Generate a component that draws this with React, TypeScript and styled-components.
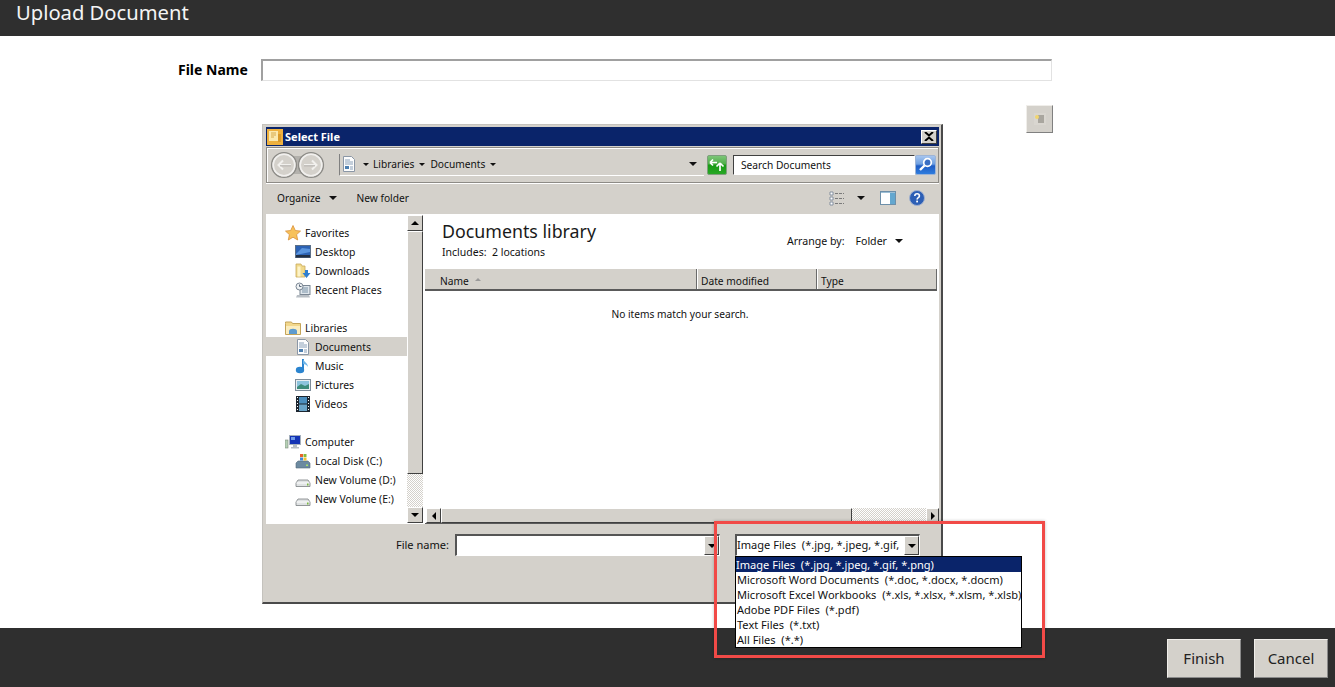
import React from "react";
import styled, { createGlobalStyle } from "styled-components";

const Global = createGlobalStyle`
  html, body { margin: 0; padding: 0; height: 100%; background: #fff; overflow: hidden; }
  #root { height: 100%; }
  * { box-sizing: border-box; }
`;

const FACE = "#d4d1cb";
const UI = `"Noto Sans", "DejaVu Sans", sans-serif`;

const Page = styled.div`
  position: relative;
  height: 100vh;
  min-height: 687px;
  display: flex;
  flex-direction: column;
  font-family: "Noto Sans", sans-serif;
  color: #000;
`;
const Header = styled.header`
  height: 36px;
  flex: none;
  background: #2f2f2f;
  color: #f4f4f4;
  padding: 1px 0 0 16px;
  font-size: 20.2px;
  line-height: 22px;
`;
const Main = styled.main`
  flex: 1;
  min-height: 0;
`;
const FileRow = styled.div`
  display: flex;
  align-items: center;
  margin-top: 23px;
  padding-left: 178px;
  height: 22px;
`;
const FileLabel = styled.label`
  width: 83px;
  flex: none;
  font-weight: 700;
  font-size: 14px;
  line-height: 18px;
  padding-bottom: 1px;
`;
const FileInput = styled.div`
  width: 791px;
  height: 22px;
  border: 1px solid #e2e2e2;
  border-top: 2px solid #a0a0a0;
  border-left: 2px solid #a0a0a0;
`;
const Workspace = styled.div`
  display: flex;
  align-items: flex-start;
  margin-top: 24px;
  padding-left: 262px;
`;
const AttachButton = styled.button`
  width: 27px;
  height: 28px;
  margin-left: 83px;
  padding: 0;
  display: flex;
  align-items: center;
  justify-content: center;
  background: ${FACE};
  border: 1px solid;
  border-color: #f0eeea #808080 #808080 #f0eeea;
`;
const Dialog = styled.section`
  position: relative;
  width: 681px;
  height: 480px;
  margin-top: 19px;
  flex: none;
  display: flex;
  flex-direction: column;
  background: ${FACE};
  border: 1px solid #c4c2bd;
  border-right: 2px solid #4a4a4a;
  border-bottom: 2px solid #4a4a4a;
  padding: 2px 2px 1px 3px;
  font-family: ${UI};
  font-size: 10.2px;
  color: #111;
`;
const TitleBar = styled.div`
  height: 19px;
  flex: none;
  display: flex;
  align-items: center;
  background: #0a246a;
  color: #fff;
  font-weight: 700;
  font-size: 11px;
  padding: 0 2px 0 1px;
`;
const TitleText = styled.span`
  margin-left: 2px;
  flex: 1;
`;
const CloseButton = styled.div`
  width: 16px;
  height: 14px;
  display: flex;
  align-items: center;
  justify-content: center;
  background: ${FACE};
  border: 1px solid;
  border-color: #fff #404040 #404040 #fff;
`;
const AddressBar = styled.div`
  height: 36px;
  flex: none;
  margin-top: 1px;
  display: flex;
  align-items: center;
  padding: 0 2px 1px 3px;
  border: 1px solid #8d8b86;
  box-shadow: inset 1px 1px #fff, 0 1px #fff;
`;
const NavCircles = styled.div`
  display: flex;
  width: 69px;
  flex: none;
`;
const PathBox = styled.div`
  width: 365px;
  height: 22px;
  flex: none;
  display: flex;
  align-items: center;
  border-left: 1px solid #808080;
  border-bottom: 1px solid #fff;
  padding-left: 1px;
  white-space: nowrap;
`;
const Crumb = styled.span<{ $left: number }>`
  margin-left: ${(p) => p.$left}px;
  display: inline-flex;
  align-items: center;
`;
const Caret = styled.span<{ $gap?: number; $size?: number }>`
  display: inline-block;
  flex: none;
  width: 0;
  height: 0;
  margin-left: ${(p) => p.$gap ?? 0}px;
  border-left: ${(p) => p.$size ?? 4}px solid transparent;
  border-right: ${(p) => p.$size ?? 4}px solid transparent;
  border-top: ${(p) => p.$size ?? 4}px solid #111;
`;
const PathEnd = styled.div`
  flex: 1;
  display: flex;
  justify-content: flex-end;
  padding-right: 7px;
`;
const SearchGroup = styled.div`
  display: flex;
  align-items: center;
  margin-left: 6px;
`;
const SearchField = styled.div`
  width: 182px;
  height: 20px;
  display: flex;
  align-items: center;
  padding-left: 7px;
  background: #fff;
  border: 1px solid;
  border-color: #404040 #fff #fff #404040;
`;
const RefreshBox = styled.div`
  width: 20px;
  height: 20px;
  flex: none;
  margin-left: 3px;
`;
const Toolbar = styled.div`
  height: 31px;
  flex: none;
  display: flex;
  align-items: center;
  padding: 0 0 2px 11px;
`;
const ToolText = styled.span<{ $gap?: number }>`
  margin-left: ${(p) => p.$gap ?? 0}px;
`;
const ToolRight = styled.div`
  margin-left: auto;
  display: flex;
  align-items: center;
  padding-right: 14px;
`;
const Gap = styled.span<{ $w: number }>`
  display: inline-block;
  width: ${(p) => p.$w}px;
`;
const Body = styled.div`
  height: 310px;
  flex: none;
  display: flex;
  background: #fff;
`;
const NavPane = styled.nav`
  width: 141px;
  flex: none;
  padding-top: 9px;
  font-size: 10.4px;
`;
const NavRow = styled.div<{ $sub?: boolean; $active?: boolean }>`
  height: 19px;
  display: flex;
  align-items: center;
  gap: 4px;
  padding-left: ${(p) => (p.$sub ? 29 : 19)}px;
  background: ${(p) => (p.$active ? FACE : "transparent")};
  & > svg { flex: none; }
`;
const NavSpacer = styled.div`
  height: 19px;
`;
const VScroll = styled.div`
  width: 16px;
  flex: none;
  display: flex;
  flex-direction: column;
  padding: 1px 0;
`;
const ScrollButton = styled.div<{ $w: number; $h: number }>`
  width: ${(p) => p.$w}px;
  height: ${(p) => p.$h}px;
  flex: none;
  display: flex;
  align-items: center;
  justify-content: center;
  background: ${FACE};
  border: 1px solid;
  border-color: #fff #404040 #404040 #fff;
`;
const Thumb = styled.div<{ $len: number; $horizontal?: boolean }>`
  flex: none;
  ${(p) => (p.$horizontal ? `width: ${p.$len}px; height: 15px;` : `height: ${p.$len}px; width: 16px;`)}
  background: ${FACE};
  border: 1px solid;
  border-color: #fff #404040 #404040 #fff;
`;
const Track = styled.div`
  flex: 1;
  background: repeating-conic-gradient(#d4d1cb 0 25%, #fff 0 50%) 0 0 / 2px 2px;
`;
const ContentPane = styled.div`
  flex: 1;
  min-width: 0;
  margin-left: 2px;
  display: flex;
  flex-direction: column;
`;
const LibraryHead = styled.div`
  height: 55px;
  flex: none;
  display: flex;
  justify-content: space-between;
  padding: 5px 36px 0 17px;
`;
const LibraryTitle = styled.div`
  font-size: 17.8px;
  line-height: 24px;
  color: #1a1a1a;
`;
const LibrarySub = styled.div`
  margin-top: 2px;
  line-height: 14px;
  font-size: 10.5px;
  white-space: pre;
`;
const ArrangeBy = styled.div`
  display: flex;
  align-items: center;
  height: 14px;
  margin-top: 15px;
  font-size: 10.6px;
`;
const Columns = styled.div`
  height: 22px;
  flex: none;
  display: flex;
  margin-right: 2px;
  background: ${FACE};
  border-bottom: 2px solid #5a5a5a;
`;
const Column = styled.div<{ $w: number; $pad: number }>`
  width: ${(p) => p.$w}px;
  flex: none;
  display: flex;
  align-items: center;
  padding-left: ${(p) => p.$pad}px;
  padding-top: 4px;
  border-right: 1px solid #6a6a6a;
  box-shadow: 1px 0 #fff;
`;
const SortMark = styled.span`
  width: 0;
  height: 0;
  margin-left: 6px;
  margin-bottom: 3px;
  border-left: 3px solid transparent;
  border-right: 3px solid transparent;
  border-bottom: 3px solid #9a9a9a;
`;
const Empty = styled.div`
  flex: 1;
  padding: 16px 4px 0 0;
  text-align: center;
  line-height: 14px;
`;
const HScroll = styled.div`
  height: 16px;
  flex: none;
  display: flex;
  padding-left: 1px;
  border-bottom: 1px solid #5a5a5a;
`;
const BottomBar = styled.div`
  flex: 1;
  display: flex;
  align-items: flex-start;
  padding-top: 10px;
  font-size: 11.05px;
`;
const NameLabel = styled.label`
  width: 183px;
  flex: none;
  height: 22px;
  line-height: 21px;
  text-align: right;
  margin-right: 6px;
`;
const Sunken = styled.div<{ $w: number; $gap?: number }>`
  width: ${(p) => p.$w}px;
  height: 22px;
  flex: none;
  margin-left: ${(p) => p.$gap ?? 0}px;
  display: flex;
  align-items: center;
  justify-content: space-between;
  background: #fff;
  border: 1px solid;
  border-width: 2px 1px 1px 2px;
  border-color: #555 #fff #fff #555;
  white-space: pre;
  overflow: hidden;
`;
const SelectText = styled.span`
  margin-top: -2px;
`;
const TypeList = styled.ul`
  position: absolute;
  left: 472px;
  top: 431px;
  width: 287px;
  height: 92px;
  margin: 0;
  padding: 0;
  list-style: none;
  background: #fff;
  border: 1px solid #000;
  font-size: 11.05px;
  z-index: 2;
`;
const TypeItem = styled.li<{ $on?: boolean }>`
  height: 15px;
  line-height: 15px;
  padding-left: ${(p) => (p.$on ? 0 : 1)}px;
  white-space: pre;
  background: ${(p) => (p.$on ? "#0a246a" : "#fff")};
  color: ${(p) => (p.$on ? "#fff" : "#111")};
`;
const Callout = styled.div`
  position: absolute;
  left: 714px;
  top: 521px;
  width: 331px;
  height: 137px;
  border: 3px solid #f14a47;
  box-shadow: 0 0 3px rgba(0, 0, 0, 0.25);
  z-index: 3;
  pointer-events: none;
`;
const Footer = styled.footer`
  height: 59px;
  flex: none;
  display: flex;
  justify-content: flex-end;
  gap: 13px;
  padding: 11px 7px 0 0;
  background: #2f2f2f;
`;
const FooterButton = styled.button`
  width: 74px;
  height: 39px;
  padding: 0 0 2px;
  background: ${FACE};
  border: 1px solid;
  border-color: #f0eeea #8a8a8a #8a8a8a #f0eeea;
  font-family: "Noto Sans", sans-serif;
  font-size: 15px;
  color: #222;
`;

/* ---------- drawings ---------- */
const Svg = ({ s = 16, children }: { s?: number; children: React.ReactNode }) => (
  <svg width={s} height={s} viewBox="0 0 16 16">{children}</svg>
);
const AppIcon = () => (
  <Svg>
    <rect width="16" height="16" fill="#eeb13f" />
    <rect x="2" y="2" width="9" height="10" fill="#fbe9b0" />
    <path d="M4 4h5M4 6h5M4 8h3" stroke="#d6a94a" />
    <rect x="11" y="5" width="3" height="8" fill="#d99a2b" />
  </Svg>
);
const CloseGlyph = () => (
  <svg width="10" height="9" viewBox="0 0 10 9"><path d="M1 0l4 3.5L9 0M1 9l4-3.5L9 9" stroke="#000" strokeWidth="2" fill="none" /></svg>
);
const BackForward = () => (
  <svg width="55" height="28" viewBox="0 0 55 28">
    <rect x="12" y="5" width="30" height="18" fill="#b3b1ac" />
    <circle cx="14" cy="14" r="12.4" fill="#d4d1cb" stroke="#8c8b87" strokeWidth="1.4" />
    <circle cx="14" cy="14" r="10.8" fill="none" stroke="#f1f0ee" strokeWidth="1.6" />
    <circle cx="41" cy="14" r="12.4" fill="#d4d1cb" stroke="#8c8b87" strokeWidth="1.4" />
    <circle cx="41" cy="14" r="10.8" fill="none" stroke="#f1f0ee" strokeWidth="1.6" />
    <path d="M21 14H9M13 9.5L8.5 14l4.5 4.5" stroke="#f2f1ee" strokeWidth="2" fill="none" />
    <path d="M21 14.8H10" stroke="#aeaca7" />
    <path d="M34 14h12M42 9.5l4.5 4.5-4.5 4.5" stroke="#f2f1ee" strokeWidth="2" fill="none" />
    <path d="M34 14.8h11" stroke="#aeaca7" />
  </svg>
);
const DocIcon = () => (
  <Svg>
    <path d="M2.5.5h8l3 3v12h-11z" fill="#fdfdfd" stroke="#8b97a6" />
    <path d="M4 4h5M4 6h8M4 8h8" stroke="#8aa0b8" />
    <rect x="4" y="10" width="4" height="3" fill="#4d7fb0" />
    <path d="M9 11h3M9 13h3" stroke="#8aa0b8" />
  </Svg>
);
const Refresh = () => (
  <svg width="20" height="20" viewBox="0 0 20 20">
    <defs>
      <linearGradient id="refreshFill" x1="0" y1="0" x2="0" y2="1">
        <stop offset="0" stopColor="#7fc77a" />
        <stop offset=".45" stopColor="#4fae49" />
        <stop offset=".5" stopColor="#179a14" />
        <stop offset="1" stopColor="#29a826" />
      </linearGradient>
    </defs>
    <rect x=".5" y=".5" width="19" height="19" rx="1.5" fill="url(#refreshFill)" stroke="#7f9f7d" />
    <path d="M3 7.5h7M3 7.5l3-3M3 7.5l3 3" stroke="#fff" strokeWidth="1.7" fill="none" />
    <path d="M13 16V8M13 8l-3.5 3.5M13 8l3.5 3.5" stroke="#fff" strokeWidth="1.7" fill="none" />
  </svg>
);
const SearchBtn = () => (
  <svg width="21" height="20" viewBox="0 0 21 20">
    <defs>
      <linearGradient id="searchFill" x1="0" y1="0" x2="0" y2="1">
        <stop offset="0" stopColor="#a9c7f0" />
        <stop offset=".45" stopColor="#6e9fe0" />
        <stop offset=".55" stopColor="#1f5cc4" />
        <stop offset="1" stopColor="#2f7fe0" />
      </linearGradient>
    </defs>
    <rect x=".5" y=".5" width="20" height="19" rx="1.5" fill="url(#searchFill)" stroke="#9db4d6" />
    <circle cx="12.5" cy="7.5" r="3.8" fill="#3a6fc4" stroke="#fff" strokeWidth="1.7" />
    <path d="M9.5 10.5L5 15" stroke="#fff" strokeWidth="2.4" />
  </svg>
);
const ViewsIcon = () => (
  <Svg>
    <path d="M1 2h3v3H1zM1 7h3v3H1zM1 12h3v3H1z" fill="#fff" stroke="#6f7d92" strokeWidth=".8" />
    <path d="M6 3.5h9M6 8.5h9M6 13.5h9" stroke="#7a7a7a" strokeDasharray="3 1" />
  </Svg>
);
const PaneIcon = () => (
  <Svg>
    <rect x=".5" y="1.5" width="15" height="13" fill="#fff" stroke="#6d8fa9" />
    <rect x="10" y="2" width="5" height="12" fill="#63a7cf" />
    <path d="M1 2.5h14" stroke="#9dbfd6" />
  </Svg>
);
const HelpIcon = () => (
  <Svg>
    <circle cx="8" cy="8" r="7.5" fill="#2d5fb5" stroke="#9fb0cf" />
    <path d="M5.8 6c0-3 4.6-3 4.6 0 0 1.6-2.3 1.6-2.3 3.4" stroke="#fff" strokeWidth="1.6" fill="none" />
    <rect x="7.2" y="10.6" width="1.8" height="1.8" fill="#fff" />
  </Svg>
);
const Star = () => (
  <Svg><path d="M8 .5l2.3 5 5.2.6-3.9 3.5 1.1 5.4L8 12.2 3.3 15l1.1-5.4L.5 6.1l5.2-.6z" fill="#f7c15a" stroke="#d9903a" strokeWidth=".8" /></Svg>
);
const Desktop = () => (
  <Svg>
    <rect x=".5" y="1.5" width="15" height="12" fill="#2c62b4" stroke="#5b6f88" />
    <path d="M1 10l6-6 8 1v3L1 11z" fill="#5a95df" />
    <rect x="1" y="11" width="14" height="2.5" fill="#222f44" />
  </Svg>
);
const Downloads = () => (
  <Svg>
    <path d="M1 1h5l1 2h3v11H1z" fill="#f1d98b" stroke="#c9a95c" strokeWidth=".8" />
    <rect x="2.5" y="3.5" width="3" height="10" fill="#fdf3c8" />
    <path d="M10 7h3v3h2.5L11.5 15 7.5 10H10z" fill="#2f7ed0" />
  </Svg>
);
const Recent = () => (
  <Svg>
    <rect x="5" y="3.5" width="10" height="9" fill="#dfe6ec" stroke="#7b8794" />
    <path d="M7 6h6M7 8h6M7 10h6" stroke="#7d94a8" />
    <circle cx="4.5" cy="4.5" r="3.5" fill="#eef1f3" stroke="#7b8794" />
    <path d="M4.5 2.5v2h2" stroke="#58677a" fill="none" />
    <path d="M2 13h12l1 2.5H1z" fill="#b8bec4" />
  </Svg>
);
const Libraries = () => (
  <Svg>
    <path d="M.5 3.5V2h6l1 1.5h8v11H.5z" fill="#f2d78b" stroke="#c4a45a" />
    <path d="M1 6h14v8H1z" fill="#fbedbf" />
    <path d="M4 14v-3c0-3 8-3 8 0v3z" fill="#5d9bcf" />
  </Svg>
);
const Music = () => (
  <Svg>
    <path d="M8 1v10" stroke="#2b84cf" strokeWidth="2" />
    <path d="M8 1c1 3 5 4 5 8-1-2-3-3-5-3z" fill="#6db4e8" />
    <ellipse cx="5" cy="12" rx="4.2" ry="3.2" fill="#2b84cf" />
  </Svg>
);
const Pictures = () => (
  <Svg>
    <rect x=".5" y="2.5" width="15" height="11" fill="#e9eef2" stroke="#7e8d9a" />
    <rect x="2" y="4" width="12" height="8" fill="#8cc3dc" />
    <path d="M2 10l4-3 4 2 4-2v5H2z" fill="#3c8b7a" />
  </Svg>
);
const Videos = () => (
  <Svg>
    <rect x="1" y="0" width="14" height="16" fill="#1d2630" />
    <rect x="4" y="1" width="8" height="6.5" fill="#4c8fbe" />
    <rect x="4" y="8.5" width="8" height="6.5" fill="#6aa4c8" />
    <path d="M2 1.5h1M2 4.5h1M2 7.5h1M2 10.5h1M2 13.5h1M13 1.5h1M13 4.5h1M13 7.5h1M13 10.5h1M13 13.5h1" stroke="#fff" />
  </Svg>
);
const Computer = () => (
  <Svg>
    <rect x="4.5" y="1.5" width="11" height="9" fill="#1433b5" stroke="#a5b0bd" />
    <path d="M6 3h4v3H6z" fill="#6f9ae8" />
    <rect x="0" y="6" width="3" height="8" fill="#b5d0b5" stroke="#7e8a7e" strokeWidth=".6" />
    <path d="M8 11h4v2h2v1.5H6V13h2z" fill="#b5bcc4" />
  </Svg>
);
const LocalDisk = () => (
  <Svg>
    <path d="M1 10l2-2h10l2 2v5H1z" fill="#6c8aa0" stroke="#54697b" strokeWidth=".6" />
    <rect x="11" y="11.5" width="2" height="1.5" fill="#a7e06a" />
    <rect x="5" y="1" width="3" height="3" fill="#e8622c" />
    <rect x="8.5" y="1" width="3" height="3" fill="#86bb3c" />
    <rect x="5" y="4.5" width="3" height="3" fill="#3f88d8" />
    <rect x="8.5" y="4.5" width="3" height="3" fill="#f2c233" />
  </Svg>
);
const Volume = () => (
  <Svg>
    <path d="M1 11l2-3h10l2 3v3.5H1z" fill="#dfe2e3" stroke="#7a7f82" strokeWidth=".8" />
    <path d="M1.5 11h13" stroke="#fff" />
    <rect x="12" y="11.5" width="1.5" height="2" fill="#79b83e" />
  </Svg>
);
const Arrow = ({ dir }: { dir: "up" | "down" | "left" | "right" }) => {
  const d = { up: "M4 1l4 4H0z", down: "M0 1h8L4 5z", left: "M5 0v8L1 4z", right: "M1 0v8l4-4z" }[dir];
  const horizontal = dir === "left" || dir === "right";
  return <svg width={horizontal ? 6 : 8} height={horizontal ? 8 : 6} viewBox={horizontal ? "0 0 6 8" : "0 0 8 6"}><path d={d} fill="#000" /></svg>;
};
const AttachIcon = () => (
  <svg width="14" height="14" viewBox="0 0 14 14">
    <rect x="1" y="1" width="12" height="12" fill="#d9d6d0" />
    <rect x="5" y="3" width="6" height="8" fill="#a9a69f" />
    <circle cx="4" cy="5" r="2" fill="#f1d56e" />
  </svg>
);

const files = [
  "Image Files  (*.jpg, *.jpeg, *.gif, *.png)",
  "Microsoft Word Documents  (*.doc, *.docx, *.docm)",
  "Microsoft Excel Workbooks  (*.xls, *.xlsx, *.xlsm, *.xlsb)",
  "Adobe PDF Files  (*.pdf)",
  "Text Files  (*.txt)",
  "All Files  (*.*)",
];

export default function App() {
  return (
    <Page>
      <Global />
      <Header>Upload Document</Header>
      <Main>
        <FileRow>
          <FileLabel>File Name</FileLabel>
          <FileInput />
        </FileRow>
        <Workspace>
          <Dialog>
            <TitleBar>
              <AppIcon />
              <TitleText>Select File</TitleText>
              <CloseButton><CloseGlyph /></CloseButton>
            </TitleBar>
            <AddressBar>
              <NavCircles><BackForward /></NavCircles>
              <PathBox>
                <DocIcon />
                <Crumb $left={6}><Caret $size={3} /></Crumb>
                <Crumb $left={4}>Libraries</Crumb>
                <Crumb $left={5}><Caret $size={3} /></Crumb>
                <Crumb $left={5}>Documents</Crumb>
                <Crumb $left={5}><Caret $size={3} /></Crumb>
                <PathEnd><Caret /></PathEnd>
              </PathBox>
              <RefreshBox><Refresh /></RefreshBox>
              <SearchGroup>
                <SearchField>Search Documents</SearchField>
                <SearchBtn />
              </SearchGroup>
            </AddressBar>
            <Toolbar>
              <ToolText>Organize</ToolText>
              <Caret $gap={8} />
              <ToolText $gap={20}>New folder</ToolText>
              <ToolRight>
                <ViewsIcon />
                <Caret $gap={12} />
                <Gap $w={15} />
                <PaneIcon />
                <Gap $w={13} />
                <HelpIcon />
              </ToolRight>
            </Toolbar>
            <Body>
              <NavPane>
                <NavRow><Star />Favorites</NavRow>
                <NavRow $sub><Desktop />Desktop</NavRow>
                <NavRow $sub><Downloads />Downloads</NavRow>
                <NavRow $sub><Recent />Recent Places</NavRow>
                <NavSpacer />
                <NavRow><Libraries />Libraries</NavRow>
                <NavRow $sub $active><DocIcon />Documents</NavRow>
                <NavRow $sub><Music />Music</NavRow>
                <NavRow $sub><Pictures />Pictures</NavRow>
                <NavRow $sub><Videos />Videos</NavRow>
                <NavSpacer />
                <NavRow><Computer />Computer</NavRow>
                <NavRow $sub><LocalDisk />Local Disk (C:)</NavRow>
                <NavRow $sub><Volume />New Volume (D:)</NavRow>
                <NavRow $sub><Volume />New Volume (E:)</NavRow>
              </NavPane>
              <VScroll>
                <ScrollButton $w={16} $h={16}><Arrow dir="up" /></ScrollButton>
                <Thumb $len={243} />
                <Track />
                <ScrollButton $w={16} $h={16}><Arrow dir="down" /></ScrollButton>
              </VScroll>
              <ContentPane>
                <LibraryHead>
                  <div>
                    <LibraryTitle>Documents library</LibraryTitle>
                    <LibrarySub>Includes:  2 locations</LibrarySub>
                  </div>
                  <ArrangeBy>
                    Arrange by:<Gap $w={11} />Folder<Caret $gap={8} />
                  </ArrangeBy>
                </LibraryHead>
                <Columns>
                  <Column $w={272} $pad={15}>Name<SortMark /></Column>
                  <Column $w={120} $pad={4}>Date modified</Column>
                  <Column $w={120} $pad={4}>Type</Column>
                </Columns>
                <Empty>No items match your search.</Empty>
                <HScroll>
                  <ScrollButton $w={15} $h={15}><Arrow dir="left" /></ScrollButton>
                  <Thumb $len={411} $horizontal />
                  <Track />
                  <ScrollButton $w={13} $h={15}><Arrow dir="right" /></ScrollButton>
                </HScroll>
              </ContentPane>
            </Body>
            <BottomBar>
              <NameLabel>File name:</NameLabel>
              <Sunken $w={265}>
                <span />
                <ScrollButton $w={15} $h={19}><Arrow dir="down" /></ScrollButton>
              </Sunken>
              <Sunken $w={185} $gap={15}>
                <SelectText>Image Files  (*.jpg, *.jpeg, *.gif,</SelectText>
                <ScrollButton $w={15} $h={19}><Arrow dir="down" /></ScrollButton>
              </Sunken>
            </BottomBar>
            <TypeList>
              {files.map((f, i) => (
                <TypeItem key={f} $on={i === 0}>{f}</TypeItem>
              ))}
            </TypeList>
          </Dialog>
          <AttachButton aria-label="Attach"><AttachIcon /></AttachButton>
        </Workspace>
      </Main>
      <Footer>
        <FooterButton>Finish</FooterButton>
        <FooterButton>Cancel</FooterButton>
      </Footer>
      <Callout />
    </Page>
  );
}
